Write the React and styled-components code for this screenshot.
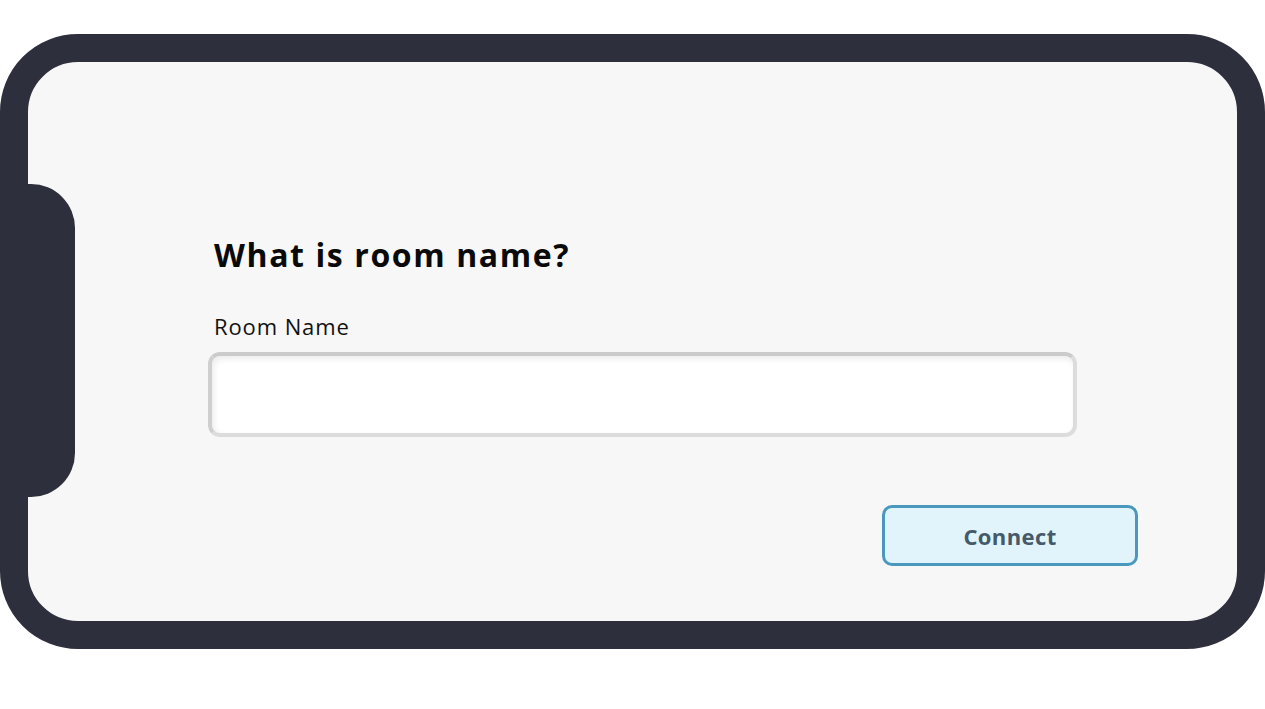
import React, { useState } from 'react';
import styled, { createGlobalStyle } from 'styled-components';

const GlobalStyle = createGlobalStyle`
	html, body {
		margin: 0;
		padding: 0;
		background: #ffffff;
		font-family: "Open Sans", "Noto Sans", sans-serif;
	}
`;

const Page = styled.div`
	width: 1265px;
	height: 709px;
	padding-top: 34px;
	box-sizing: border-box;
	overflow: hidden;
`;

const Phone = styled.div`
	position: relative;
	width: 1265px;
	height: 615px;
	box-sizing: border-box;
	border: 28px solid #2e2f3d;
	border-radius: 78px;
	background: #f7f7f7;
`;

const Notch = styled.div`
	position: absolute;
	left: -28px;
	top: 122px;
	width: 75px;
	height: 313px;
	background: #2e2f3d;
	border-radius: 0 44px 44px 0;
`;

const Screen = styled.div`
	display: flex;
	flex-direction: column;
	padding: 173px 0 0 180px;
	width: 930px;
`;

const Title = styled.h1`
	margin: 0;
	padding-left: 6px;
	font-size: 32px;
	line-height: 40px;
	font-weight: 700;
	letter-spacing: 1.6px;
	color: #0a0a0a;
`;

const Label = styled.label`
	margin-top: 37px;
	padding-left: 6px;
	font-size: 22px;
	line-height: 28px;
	letter-spacing: 0.9px;
	color: #111;
`;

const Input = styled.input`
	margin-top: 12px;
	width: 869px;
	height: 85px;
	box-sizing: border-box;
	border: 4px solid #dcdcdc;
	border-top-color: #cbcbcb;
	border-left-color: #cfcfcf;
	border-radius: 12px;
	background: #ffffff;
	box-shadow: inset 2px 3px 6px rgba(0, 0, 0, 0.08);
	font-size: 22px;
	font-family: inherit;
	padding: 0 16px;
	outline: none;
`;

const Actions = styled.div`
	display: flex;
	justify-content: flex-end;
	margin-top: 68px;
`;

const Button = styled.button`
	width: 256px;
	height: 61px;
	box-sizing: border-box;
	border: 3px solid #4a98be;
	border-radius: 10px;
	background: #e1f4fb;
	color: #45596b;
	font-family: inherit;
	font-size: 22px;
	font-weight: 700;
	letter-spacing: 0.4px;
	cursor: pointer;
`;

export default function App() {
	const [room, setRoom] = useState('');
	return (
		<Page>
			<GlobalStyle />
			<Phone>
				<Notch />
				<Screen>
					<Title>What is room name?</Title>
					<Label htmlFor="room">Room Name</Label>
					<Input id="room" value={room} onChange={(e) => setRoom(e.target.value)} />
					<Actions>
						<Button>Connect</Button>
					</Actions>
				</Screen>
			</Phone>
		</Page>
	);
}
